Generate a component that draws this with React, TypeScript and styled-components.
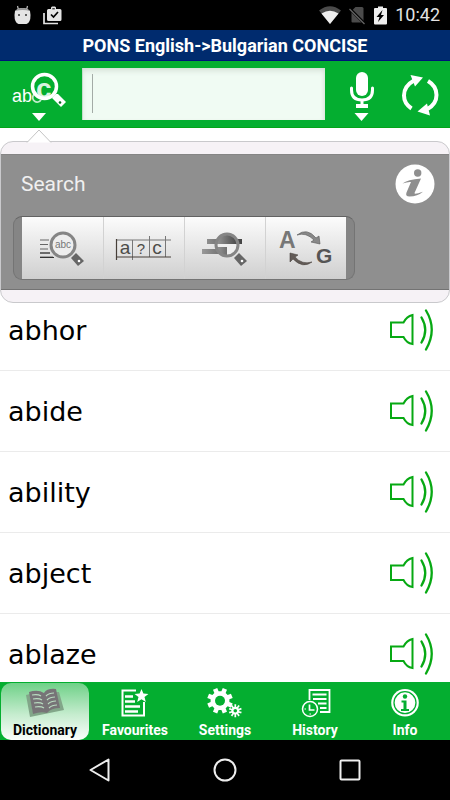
import React from "react";
import styled, { createGlobalStyle } from "styled-components";

const GREEN = "#04ae30";

const GlobalStyle = createGlobalStyle`
  *, *::before, *::after { box-sizing: border-box; }
  body { margin: 0; background: #fff; font-family: Roboto, "Liberation Sans", sans-serif; }
  button { margin: 0; padding: 0; border: 0; background: none; font: inherit; color: inherit; cursor: pointer; }
  svg { display: block; flex: none; }
`;

const Screen = styled.div`
  display: flex;
  flex-direction: column;
  height: 100vh;
  overflow: hidden;
`;

const StatusBar = styled.div`
  display: flex;
  flex: none;
  justify-content: space-between;
  align-items: center;
  height: 30px;
  padding: 0 10px 0 14px;
  background: #000;
  color: #e4e4e4;
`;

const StatusGroup = styled.div<{ $gap: number }>`
  display: flex;
  align-items: center;
  gap: ${(p) => p.$gap}px;
`;

const Clock = styled.time`
  font-size: 18px;
  line-height: 32px;
`;

const TitleBar = styled.h1`
  flex: none;
  margin: 0;
  height: 31px;
  border-bottom: 1px solid #00127a;
  background: #002b6e;
  color: #fff;
  font-size: 18px;
  font-weight: 700;
  line-height: 32px;
  text-align: center;
`;

const Toolbar = styled.header`
  display: grid;
  flex: none;
  grid-template-columns: 82px 1fr 74px 51px;
  align-items: center;
  height: 67px;
  border-bottom: 1px solid #04a418;
  background: ${GREEN};
`;

const IconButton = styled.button`
  display: flex;
  align-items: center;
  justify-content: center;
`;

const SearchInput = styled.input`
  width: 100%;
  min-width: 0;
  height: 52px;
  padding: 0 10px;
  border: 0;
  border-left: 1px solid #c4dcca;
  border-radius: 0;
  outline: 0;
  background: linear-gradient(90deg, transparent 9px, #a3aba6 9px, #a3aba6 10px, transparent 10px) 0 6px / 100% 39px no-repeat, #f0fbf3;
  box-shadow: inset 0 4px 6px -2px #cfdbd2, inset -3px 0 4px -2px #dce7df;
  font: 22px Roboto, sans-serif;
`;

const Content = styled.main`
  display: flex;
  flex: 1;
  flex-direction: column;
  min-height: 0;
  overflow: hidden;
  padding-top: 13px;
`;

const Popover = styled.section`
  position: relative;
  flex: none;
  margin-bottom: -13px;
  padding: 12px 0;
  border: 1px solid #c9c9cc;
  border-radius: 13px;
  background: #f6f2f6;
`;

const Pointer = styled.svg`
  position: absolute;
  top: -13px;
  left: 25px;
`;

const Panel = styled.div`
  padding: 8px 12px 9px;
  border-top: 1px solid #858585;
  border-bottom: 1px solid #737373;
  background: #8f8f8f;
`;

const PanelHeader = styled.div`
  display: flex;
  align-items: center;
  justify-content: space-between;
  height: 41px;
  margin-bottom: 12px;
  padding: 0 2px 0 8px;
`;

const PanelTitle = styled.h2`
  margin: 0;
  color: #f0f0f0;
  font-size: 21px;
  font-weight: 400;
  line-height: 30px;
`;

const Segments = styled.div`
  display: grid;
  grid-template-columns: repeat(4, 81px);
  justify-content: center;
  width: 342px;
  max-width: 100%;
  height: 64px;
  border: 1px solid #747474;
  border-top-color: #626262;
  border-radius: 9px;
  background: #858585;
`;

const Segment = styled.button`
  display: flex;
  background: linear-gradient(#fcfcfc, #cfcfcf);
  & + & { border-left: 1px solid #d2d2d2; }
`;

const WordList = styled.ul`
  flex: 1;
  min-height: 0;
  margin: 0;
  padding: 0;
  overflow: hidden;
  list-style: none;
`;

const WordRow = styled.li`
  display: flex;
  align-items: center;
  justify-content: space-between;
  height: 81px;
  padding: 0 14px 0 8px;
  border-bottom: 1px solid #ebebeb;
  color: #000;
  font-family: "DejaVu Sans", sans-serif;
  font-size: 27px;
  line-height: 36px;
`;

const Word = styled.span`
  padding-top: 2px;
`;

const TabBar = styled.nav`
  display: grid;
  flex: none;
  grid-template-columns: repeat(5, 1fr);
  height: 58px;
  padding: 1px 0;
  background: ${GREEN};
`;

const Tab = styled.button<{ $active?: boolean }>`
  display: flex;
  flex-direction: column;
  align-items: center;
  min-width: 0;
  margin: 0 1px;
  border-radius: 10px;
  background: ${(p) => (p.$active ? "linear-gradient(#6fd188, #c5ecce 55%, #fbfefb)" : "none")};
  color: ${(p) => (p.$active ? "#000" : "#fff")};
  font-size: 14px;
  font-weight: 700;
  line-height: 20px;
`;

const SystemBar = styled.nav`
  display: grid;
  flex: none;
  grid-template-columns: repeat(3, 1fr);
  height: 60px;
  padding: 0 38px;
  background: #000;
`;

const Cat = () => (
  <svg width="17" height="20" viewBox="0 0 17 20" aria-hidden="true">
    <path d="M4.5 5 3.5 1M12.5 5l1-4" stroke="#bbb" strokeWidth="1.2" />
    <path d="M1 6Q4 3 8.5 3T16 6l.5 4q0 8-4 9h-8q-4-1-4-9z" fill="#e4e4e4" />
    <path d="M1 6Q4 3 8.5 3T16 6q-7-2-15 0" fill="#999" />
    <circle cx="5" cy="10" r="1" fill="#333" />
    <circle cx="12" cy="10" r="1" fill="#333" />
  </svg>
);

const Task = () => (
  <svg width="19" height="19" viewBox="0 0 19 19" aria-hidden="true">
    <path d="M1 7v10.500h14" fill="none" stroke="#e4e4e4" strokeWidth="1.700" />
    <path d="M4 4.500q0-1.500 1.500-1.500H8V1.500L9 .5h3l1 1V3h4q1.500 0 1.500 1.500v9q0 1.500-1.500 1.500H5.500Q4 15 4 13.500z" fill="#e4e4e4" />
    <path d="M9.300 2.800h2.500" stroke="#000" />
    <path d="m8 8.500 2.500 2.500 4.500-5" fill="none" stroke="#000" strokeWidth="1.700" />
  </svg>
);

const Wifi = () => (
  <svg width="22" height="19" viewBox="0 0 22 19" aria-hidden="true">
    <path d="M0 4.500Q11-4 22 4.500L11 18z" fill="#4b4b4b" />
    <path d="M2.500 7.500Q11 2 19.500 7.500L11 18z" fill="#efefef" />
  </svg>
);

const NoSim = () => (
  <svg width="17" height="19" viewBox="0 0 17 19" aria-hidden="true">
    <path d="M6.500 1H13q1.500 0 1.500 1.500v14H3.500q-1 0-1-1V5z" fill="#4b4b4b" />
    <path d="m1 3 15 15" stroke="#000" strokeWidth="3" />
    <path d="m.5 3 15 15" stroke="#666" strokeWidth="1.300" />
  </svg>
);

const Battery = () => (
  <svg width="13" height="19" viewBox="0 0 13 19" aria-hidden="true">
    <path d="M1 2h3V.5h5V2h3q1 0 1 1v14.500q0 1-1 1H1q-1 0-1-1V3q0-1 1-1z" fill="#efefef" />
    <path d="m8.500 4-6 7h3l-1.500 5 6-7H7z" fill="#000" />
  </svg>
);

const SearchMode = () => (
  <svg width="82" height="66" viewBox="0 0 82 66" aria-hidden="true">
    <text x="12" y="41" fill="#fff" fontFamily="Liberation Sans, sans-serif" fontSize="18">ab</text>
    <path d="M40 33a4.500 4.500 0 1 0 1 6" fill="none" stroke="#fff" strokeOpacity=".75" strokeWidth="1.700" />
    <circle cx="44.500" cy="25.500" r="12" fill={GREEN} fillOpacity=".55" />
    <text x="36" y="37" fill="#d9f3df" fontFamily="Liberation Sans, sans-serif" fontSize="28" fontWeight="700">c</text>
    <circle cx="44.500" cy="25.500" r="12" fill="none" stroke="#fff" strokeWidth="3.500" />
    <path d="m56 33-4 4 9 9 5-5-8-8z" fill="#fff" />
    <circle cx="60" cy="41.500" r="1.300" fill="#066b20" />
    <path d="M32 52h14l-7 8z" fill="#fff" />
  </svg>
);

const Mic = () => (
  <svg width="74" height="66" viewBox="0 0 74 66" aria-hidden="true">
    <rect x="31" y="11" width="12" height="24" rx="6" fill="#fff" />
    <path d="M26.500 27v2q0 10 10.500 10t10.500-10v-2" fill="none" stroke="#fff" strokeWidth="3" strokeLinecap="round" />
    <path d="M35.500 39h3v4H43v4H31v-4h4.500z" fill="#fff" />
    <path d="M29.500 52h14l-7 8z" fill="#fff" />
  </svg>
);

const Sync = () => (
  <svg width="51" height="66" viewBox="0 0 51 66" aria-hidden="true">
    <path d="M15 19.500Q5 25 5 34.500q0 8 7.500 13M29 20q8.500 5 8.500 14 0 9-9 14" fill="none" stroke="#fff" strokeWidth="4" />
    <path d="m11.500 14 12.500 2.500-8 9zM18.500 50.500l9.500-8 3 12z" fill="#fff" />
  </svg>
);

const InfoItalic = () => (
  <svg width="40" height="40" viewBox="0 0 40 40" aria-hidden="true">
    <circle cx="20" cy="20" r="19.500" fill="#fff" />
    <circle cx="22.700" cy="9" r="3.700" fill="#8f8f8f" />
    <path d="M7.500 19.500q5-4 18.500-5l-6.500 14.500q-.5 2 8.500-1.200-5.500 4.700-13.500 4.700-4.500 0-3-4l4.500-10.500q-3-.5-8.500 1.500z" fill="#8f8f8f" />
  </svg>
);

const PrefixSearch = () => (
  <svg width="80" height="62" viewBox="0 0 80 62" aria-hidden="true">
    <path d="M18 23h9M18 27.500h8M18 32h8M18 36h10M18 40h13" stroke="#666" strokeWidth="1.200" />
    <path d="M18 36h10M18 40.500h14" stroke="#333" strokeWidth="1.200" />
    <circle cx="41" cy="28" r="12" fill="#eee" stroke="#858585" strokeWidth="3" />
    <text x="41" y="31" textAnchor="middle" fill="#777" fontFamily="Liberation Sans, sans-serif" fontSize="10">abc</text>
    <path d="m54 36 8 8-6 5-7-8z" fill="#666" />
    <circle cx="57" cy="44" r="1.300" fill="#fff" />
  </svg>
);

const WildcardSearch = () => (
  <svg width="80" height="62" viewBox="0 0 80 62" aria-hidden="true">
    <path d="M12 23h55M28.500 23v20M45.500 19v21M61.500 19v21" stroke="#777" />
    <path d="M12.500 22v21M12 40h55" stroke="#463f39" strokeWidth="1.200" />
    <g fill="#4c4c48" fontFamily="Liberation Sans, sans-serif" textAnchor="middle">
      <text x="21" y="37" fontSize="19">a</text>
      <text x="37" y="37" fontSize="15">?</text>
      <text x="53" y="37" fontSize="19">c</text>
    </g>
  </svg>
);

const FullSearch = () => (
  <svg width="80" height="62" viewBox="0 0 80 62" aria-hidden="true">
    <defs>
      <linearGradient id="bars"><stop stopColor="#999" /><stop offset="1" stopColor="#444" /></linearGradient>
    </defs>
    <path d="M22 22h35v5H22zM17 32h25v5H17z" fill="url(#bars)" />
    <circle cx="42" cy="28" r="11" fill="#eee" />
    <path d="M31 27a11 11 0 0 1 22 0zM31 30h11V39q-10-1-11-9" fill="url(#bars)" />
    <circle cx="42" cy="28" r="11" fill="none" stroke="#858585" strokeWidth="3" />
    <path d="m54 36 8 8-6 5-7-8z" fill="#666" />
    <circle cx="57" cy="44" r="1.300" fill="#fff" />
  </svg>
);

const SwapLanguages = () => (
  <svg width="80" height="62" viewBox="0 0 80 62" aria-hidden="true">
    <g fontFamily="Liberation Sans, sans-serif" fontWeight="700">
      <text x="13" y="31" fill="#777" fontSize="23">A</text>
      <text x="50" y="46" fill="#555" fontSize="21">G</text>
    </g>
    <path d="M31 18q10-8 19 3l3-2 1 8-9-2 3-2q-8-8-17-5z" fill="#888" stroke="#555" strokeWidth=".6" />
    <path d="m24 36 8 2-3 2q7 8 17 5-9 7-19-3l-3 3z" fill="#625b57" stroke="#4b4540" strokeWidth=".6" />
  </svg>
);

const Speaker = () => (
  <svg width="50" height="44" viewBox="0 0 50 44" fill="none" stroke="#07a913" strokeWidth="2" aria-hidden="true">
    <path d="M26.500 7v29q-6-1-9-7H5V14.500h12.500q3-6 9-7.500z" />
    <path d="M35.500 9.500q7.500 12.500 0 25M40 2.500q11.500 19 0 39" strokeWidth="2.300" strokeLinecap="round" />
  </svg>
);

type TabIconProps = { children: React.ReactNode };
const TabIcon = ({ children }: TabIconProps) => (
  <svg width="88" height="37" viewBox="1 -1 88 37" aria-hidden="true">{children}</svg>
);

const gear = (cx: number, cy: number, outer: number, inner: number, teeth: number) => {
  const points: string[] = [];
  for (let i = 0; i < teeth; i += 1) {
    const a = (i * 2 * Math.PI) / teeth + Math.PI / teeth;
    const s = Math.PI / teeth;
    [[-0.62, inner], [-0.45, outer], [0.45, outer], [0.62, inner]].forEach(([k, r]) => {
      points.push(`${(cx + r * Math.cos(a + k * s)).toFixed(2)},${(cy + r * Math.sin(a + k * s)).toFixed(2)}`);
    });
  }
  return points.join(" ");
};

const Book = () => (
  <TabIcon>
    <path d="m26 11 4-1 3 17 14-1 12-4-3-14 3 0 5 18-34 7z" fill="#82a689" />
    <path d="M29 8q9-3 15 1 3-5 12-4l4 19q-9 0-13 5-6-2-14 1z" fill="#777477" />
    <path d="M32 11q6-1 9 1M33 15q6-1 9 1M34 19q6-1 9 1M35 23q6-1 9 1M46 12q3-3 8-3M47 16q3-3 8-3M48 20q3-3 8-3M49 24q3-3 8-3" fill="none" stroke="#b9dcc0" strokeWidth="1.200" />
  </TabIcon>
);

const Favourites = () => (
  <TabIcon>
    <path d="M46 6.500H32.500v25h21.500V18" fill="none" stroke="#fff" strokeWidth="2" />
    <path d="M35 12.500h8M35 17.500h10M35 22.500h15M35 27.500h13" stroke="#fff" strokeWidth="2.300" />
    <path d="m51.500 5 1.900 4.600 5 .3-3.900 3.200 1.300 4.900-4.300-2.700-4.300 2.700 1.300-4.900-3.900-3.200 5-.3z" fill="#fff" />
  </TabIcon>
);

const Settings = () => (
  <TabIcon>
    <polygon points={gear(40, 16.7, 13, 9.5, 8)} fill="#fff" />
    <circle cx="40" cy="16.700" r="5" fill={GREEN} />
    <polygon points={gear(55.3, 26.7, 6.5, 4, 10)} fill="#fff" />
    <circle cx="55.300" cy="26.700" r="1.800" fill={GREEN} />
  </TabIcon>
);

const History = () => (
  <TabIcon>
    <path d="M39.500 16V6h20v22H50" fill="none" stroke="#fff" strokeWidth="1.800" />
    <path d="M42.500 10.500h14M43 15h13.500M48 19.500h8.500M50 24h6.500" stroke="#fff" strokeWidth="1.800" />
    <circle cx="40" cy="25" r="7.500" fill={GREEN} stroke="#fff" strokeWidth="1.500" />
    <path d="M39.500 20.500V26h5" fill="none" stroke="#fff" strokeWidth="1.700" />
    <path d="M34.500 25h1.500M39.500 30h1.500" stroke="#fff" />
  </TabIcon>
);

const Info = () => (
  <TabIcon>
    <circle cx="45" cy="18.700" r="13.800" fill="#fff" />
    <circle cx="45" cy="18.700" r="11" fill="none" stroke={GREEN} strokeWidth="1.300" />
    <circle cx="45" cy="12.500" r="2.200" fill={GREEN} />
    <path d="M41.500 16.500h5V25h2.500v2h-8v-2h2.500v-6.500h-2z" fill={GREEN} />
  </TabIcon>
);

const words = ["abhor", "abide", "ability", "abject", "ablaze"];

const searchModes = [
  { label: "Search by prefix", Icon: PrefixSearch },
  { label: "Wildcard search", Icon: WildcardSearch },
  { label: "Full text search", Icon: FullSearch },
  { label: "Swap languages", Icon: SwapLanguages },
];

const tabs = [
  { label: "Dictionary", Icon: Book },
  { label: "Favourites", Icon: Favourites },
  { label: "Settings", Icon: Settings },
  { label: "History", Icon: History },
  { label: "Info", Icon: Info },
];

export default function App() {
  return (
    <Screen>
      <GlobalStyle />
      <StatusBar>
        <StatusGroup $gap={12}><Cat /><Task /></StatusGroup>
        <StatusGroup $gap={8}>
          <Wifi /><NoSim /><Battery /><Clock>10:42</Clock>
        </StatusGroup>
      </StatusBar>
      <TitleBar>PONS English-&gt;Bulgarian CONCISE</TitleBar>
      <Toolbar>
        <IconButton aria-label="Search mode"><SearchMode /></IconButton>
        <SearchInput type="text" aria-label="Search word" />
        <IconButton aria-label="Voice search"><Mic /></IconButton>
        <IconButton aria-label="Swap direction"><Sync /></IconButton>
      </Toolbar>
      <Content>
        <Popover>
          <Pointer width="26" height="14" viewBox="0 0 26 14" aria-hidden="true">
            <path d="M1 13.500 13 1l12 12.500" fill="#fff" stroke="#c4c4c4" />
          </Pointer>
          <Panel>
            <PanelHeader>
              <PanelTitle>Search</PanelTitle>
              <IconButton aria-label="About search"><InfoItalic /></IconButton>
            </PanelHeader>
            <Segments>
              {searchModes.map(({ label, Icon }) => (
                <Segment key={label} aria-label={label}><Icon /></Segment>
              ))}
            </Segments>
          </Panel>
        </Popover>
        <WordList>
          {words.map((word) => (
            <WordRow key={word}>
              <Word>{word}</Word>
              <IconButton aria-label={`Pronounce ${word}`}><Speaker /></IconButton>
            </WordRow>
          ))}
        </WordList>
      </Content>
      <TabBar>
        {tabs.map(({ label, Icon }, index) => (
          <Tab key={label} $active={index === 0}><Icon />{label}</Tab>
        ))}
      </TabBar>
      <SystemBar>
        <IconButton aria-label="Back">
          <svg width="24" height="26" viewBox="0 0 24 26"><path d="M2.500 13 20.500 2.500v21z" fill="none" stroke="#eee" strokeWidth="2" strokeLinejoin="round" /></svg>
        </IconButton>
        <IconButton aria-label="Home">
          <svg width="24" height="24" viewBox="0 0 24 24"><circle cx="12" cy="12" r="10.500" fill="none" stroke="#eee" strokeWidth="2" /></svg>
        </IconButton>
        <IconButton aria-label="Recent apps">
          <svg width="22" height="22" viewBox="0 0 22 22"><rect x="1.500" y="1.500" width="19" height="19" rx="1" fill="none" stroke="#eee" strokeWidth="2" /></svg>
        </IconButton>
      </SystemBar>
    </Screen>
  );
}
